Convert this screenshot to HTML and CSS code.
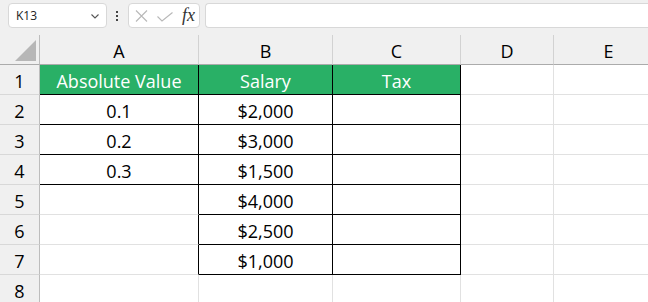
FILE: index.html
```html
<!DOCTYPE html>
<html lang="en">
<head>
  <meta charset="UTF-8">
  <meta name="viewport" content="width=device-width, initial-scale=1.0">
  <title>Absolute Value - Sheet</title>
  <link rel="stylesheet" href="styles.css">
</head>
<body>
  <div class="app">
    <!-- Formula bar -->
    <div class="toolbar">
      <div class="name-box">
        <span>K13</span>
        <svg class="chevron" width="8" height="5" viewBox="0 0 8 5">
          <path d="M0.5 0.5 L4 4 L7.5 0.5" fill="none" stroke="#555" stroke-width="1.1"/>
        </svg>
      </div>
      <div class="dots"><i></i><i></i><i></i></div>
      <div class="fx-box">
        <svg width="13" height="12" viewBox="0 0 13 12">
          <path d="M1 0.5 L12 11.5 M12 0.5 L1 11.5" stroke="#b8b8b8" stroke-width="1.1" fill="none"/>
        </svg>
        <svg width="16" height="10" viewBox="0 0 16 10">
          <path d="M0.5 4.5 L5 9 L15.5 0.5" stroke="#b8b8b8" stroke-width="1.1" fill="none"/>
        </svg>
        <span class="fx">fx</span>
      </div>
      <div class="formula-input"></div>
    </div>

    <!-- Sheet grid -->
    <div class="sheet">
      <div class="hd corner"><div class="tri"></div></div>
      <div class="hd">A</div>
      <div class="hd">B</div>
      <div class="hd">C</div>
      <div class="hd">D</div>
      <div class="hd">E</div>

      <div class="rh">1</div>
      <div class="c bx green">Absolute Value</div>
      <div class="c bx green">Salary</div>
      <div class="c bx green">Tax</div>
      <div class="c"></div>
      <div class="c"></div>

      <div class="rh">2</div>
      <div class="c bx">0.1</div>
      <div class="c bx">$2,000</div>
      <div class="c bx"></div>
      <div class="c"></div>
      <div class="c"></div>

      <div class="rh">3</div>
      <div class="c bx">0.2</div>
      <div class="c bx">$3,000</div>
      <div class="c bx"></div>
      <div class="c"></div>
      <div class="c"></div>

      <div class="rh">4</div>
      <div class="c bx">0.3</div>
      <div class="c bx">$1,500</div>
      <div class="c bx"></div>
      <div class="c"></div>
      <div class="c"></div>

      <div class="rh">5</div>
      <div class="c br"></div>
      <div class="c bx">$4,000</div>
      <div class="c bx"></div>
      <div class="c"></div>
      <div class="c"></div>

      <div class="rh">6</div>
      <div class="c br"></div>
      <div class="c bx">$2,500</div>
      <div class="c bx"></div>
      <div class="c"></div>
      <div class="c"></div>

      <div class="rh">7</div>
      <div class="c br"></div>
      <div class="c bx">$1,000</div>
      <div class="c bx"></div>
      <div class="c"></div>
      <div class="c"></div>

      <div class="rh">8</div>
      <div class="c"></div>
      <div class="c"></div>
      <div class="c"></div>
      <div class="c"></div>
      <div class="c"></div>
    </div>
  </div>
</body>
</html>
```

FILE: styles.css
```css
body {
  margin: 0;
  padding: 0;
  background: #ffffff;
  font-family: 'Open Sans', 'Noto Sans', sans-serif;
  color: #000;
}

.app {
  width: 648px;
  height: 302px;
  overflow: hidden;
  background: #f0f0f0;
}

/* formula bar */
.toolbar {
  height: 35px;
  display: flex;
  align-items: flex-start;
  padding-top: 3px;
  padding-left: 8px;
  box-sizing: border-box;
}

.name-box, .fx-box, .formula-input {
  height: 25px;
  box-sizing: border-box;
  background: #ffffff;
  border: 1px solid #d8d8d8;
  border-radius: 4px;
}

.name-box {
  width: 102px;
  display: flex;
  align-items: center;
  justify-content: space-between;
  padding: 0 7px 0 7px;
  font-size: 12px;
  color: #222;
}

.chevron {
  margin-top: 1px;
}

.dots {
  width: 22px;
  display: flex;
  flex-direction: column;
  align-items: center;
  gap: 2px;
  padding-top: 8px;
}

.dots i {
  display: block;
  width: 2px;
  height: 2px;
  background: #444;
}

.fx-box {
  width: 74px;
  display: flex;
  align-items: center;
  padding-left: 6px;
  gap: 9px;
}

.fx-box svg + svg {
  margin-top: 2px;
}

.fx {
  font-family: 'Liberation Serif', 'DejaVu Serif', serif;
  font-style: italic;
  font-size: 18px;
  color: #333;
  margin-left: 0;
  margin-top: -1px;
}

.formula-input {
  margin-left: 5px;
  width: 460px;
  border-right: none;
  border-radius: 4px 0 0 4px;
}

/* sheet */
.sheet {
  display: grid;
  grid-template-columns: 40px 159px 134px 128px 93px 110px;
  grid-auto-rows: 30px;
  background: #ffffff;
}

.sheet > div {
  box-sizing: border-box;
  display: flex;
  align-items: center;
  justify-content: center;
  font-size: 18px;
  padding-top: 3px;
}

.hd {
  background: #f0f0f0;
  border-right: 1px solid #d2d2d2;
  border-bottom: 1px solid #ababab;
}

.corner {
  border-right: 1px solid #bdbdbd !important;
  justify-content: flex-end !important;
  align-items: flex-end !important;
  padding: 0 3px 3px 0 !important;
}

.tri {
  width: 21px;
  height: 21px;
  background: #b7b7b7;
  clip-path: polygon(100% 0, 100% 100%, 0 100%);
}

.rh {
  background: #f0f0f0;
  border-right: 1px solid #bdbdbd;
  border-bottom: 1px solid #d8d8d8;
}

.c {
  border-right: 1px solid #e1e1e1;
  border-bottom: 1px solid #e1e1e1;
}

.bx {
  border-right: 1px solid #000 !important;
  border-bottom: 1px solid #000 !important;
}

.br {
  border-right: 1px solid #000 !important;
}

.green {
  background: #29b066;
  color: #ffffff;
}
```
